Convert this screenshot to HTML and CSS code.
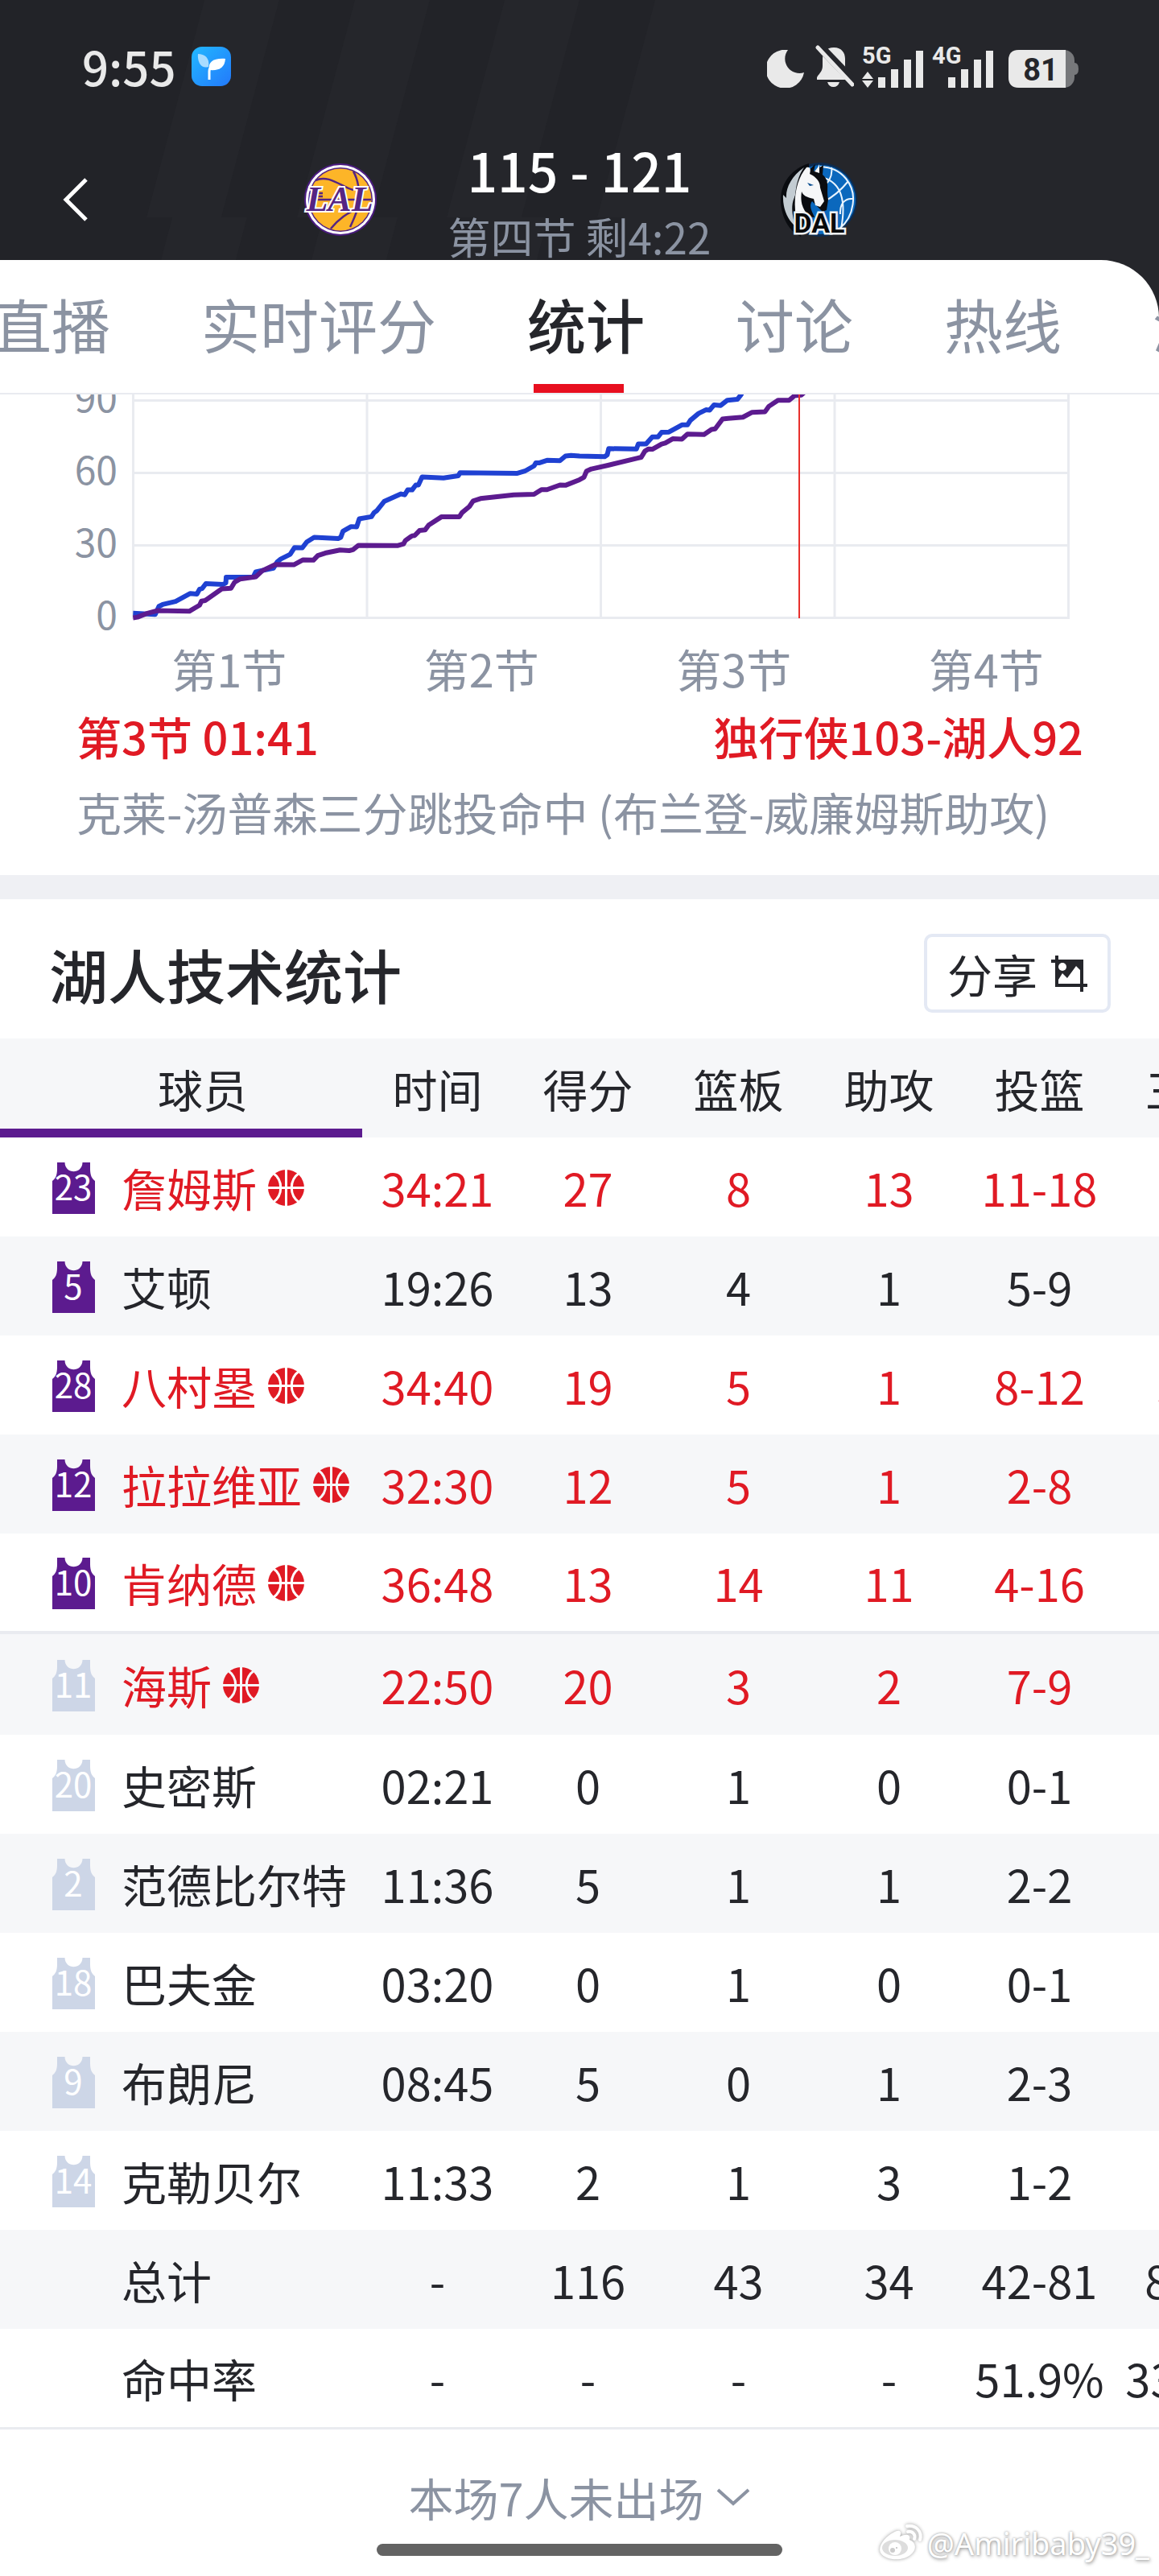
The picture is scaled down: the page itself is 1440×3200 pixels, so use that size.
FILE: index.html
```html
<!DOCTYPE html>
<html lang="zh-CN">
<head>
<meta charset="utf-8">
<meta name="viewport" content="width=device-width, initial-scale=1">
<title>湖人技术统计</title>
<link rel="stylesheet" href="styles.css">
</head>
<body>
<svg class="sprite" aria-hidden="true">
  <symbol id="jersey" viewBox="0 0 53 64"><path d="M6 0H15.500C16 15 37 15 37.500 0H47V8C47 16 49 20 53 23V64H0V23C4 20 6 16 6 8Z"/></symbol>
  <symbol id="ball" viewBox="0 0 45 45">
    <circle cx="22.500" cy="22.500" r="22.500" fill="currentColor"/>
    <g fill="none" stroke="var(--row)" stroke-width="3"><path d="M22.500 0V45M0 22.500H45M6 4C19 13 19 32 6 41M39 4C26 13 26 32 39 41"/></g>
  </symbol>
</svg>

<header class="hero">
  <svg class="stripes" viewBox="0 0 1440 323" preserveAspectRatio="none" aria-hidden="true">
    <path d="M254 0H347L275 270H182ZM441 0H534L462 270H369ZM627 0H720L648 270H555ZM814 0H1440V323H761L775 270H742ZM214 270H307L293 323H200ZM401 270H494L480 323H387ZM588 270H681L667 323H574Z"/>
  </svg>
  <div class="status">
    <span class="clock">9:55</span>
    <svg class="app" viewBox="0 0 49 49" aria-hidden="true">
      <defs><linearGradient id="sky" x1="0" y1="0" x2="1" y2="1"><stop offset="0" stop-color="#22b8ff"/><stop offset="1" stop-color="#2379fb"/></linearGradient></defs>
      <rect width="49" height="49" rx="13" fill="url(#sky)"/>
      <path d="M8 9C17 9 23 15 21 25C12 28 7 19 8 9Z" fill="#a9dcff"/>
      <path d="M42 15C27 14 20 19 22 29C35 30 41 26 42 15Z" fill="#fff"/>
      <path d="M22 41V31Q22 25 28 23" fill="none" stroke="#fff" stroke-width="3"/>
    </svg>
    <div class="indicators">
      <svg class="moon" viewBox="0 0 46 47" aria-hidden="true"><path d="M26 0A24 24 0 1 0 46 28A18 18 0 0 1 26 0Z"/></svg>
      <svg class="bell" viewBox="0 0 48 53" aria-hidden="true">
        <path d="M23 3C33 3 37 10 37 17V26C37 32 44 36 44 41V43H2V40C4 36 9 33 9 26V17C9 9 14 3 23 3ZM15 46H30Q28 52 22.500 52Q17 52 15 46Z"/>
        <path d="M2 -2L49 47" stroke="#25262b" stroke-width="11"/><path d="M3 3L46 49" stroke="#e9e9e9" stroke-width="5" stroke-linecap="round"/>
      </svg>
      <svg class="signal" viewBox="0 0 77 53" aria-hidden="true">
        <text x="0" y="23">5G</text>
        <path d="M7 33L14 42H0ZM7 53L0 44H14Z"/>
        <path d="M20 40h9v13h-9zM36 30h9v23h-9zM52 18h9v35h-9zM67 7h9v46h-9z"/>
      </svg>
      <svg class="signal" viewBox="0 0 77 53" aria-hidden="true">
        <text x="0" y="23">4G</text>
        <path d="M20 40h9v13h-9zM36 30h9v23h-9zM52 18h9v35h-9zM67 7h9v46h-9z"/>
      </svg>
      <svg class="battery" viewBox="0 0 87 47" aria-hidden="true">
        <rect width="82" height="47" rx="13" fill="#77787b"/><path d="M82 16Q87 16 87 23.500Q87 31 82 31Z" fill="#77787b"/>
        <path d="M13 0H71V47H13Q0 47 0 34V13Q0 0 13 0Z"/>
        <text class="charge" x="40" y="38" text-anchor="middle">81</text>
      </svg>
    </div>
  </div>
  <div class="match">
    <button class="back" type="button" aria-label="返回"><svg viewBox="0 0 32 54" aria-hidden="true"><path d="M29 2L4 27L29 52"/></svg></button>
    <svg class="team" viewBox="0 0 96 96" role="img" aria-label="LAL">
      <circle cx="48" cy="48" r="45" fill="#4b1c80"/><circle cx="48" cy="48" r="43" fill="#fff"/><circle cx="48" cy="48" r="40" fill="#552583"/><circle cx="48" cy="48" r="38.500" fill="#fdb528"/>
      <g fill="none" stroke="#552583" stroke-width="2.500"><path d="M17 24C34 16 50 33 64 36M10 48H86M10 40H26M10 44H26M64 13C70 23 72 38 71 50C70 62 64 73 60 82M71 60C58 62 44 74 36 84"/></g>
      <text class="lal" x="47" y="62" text-anchor="middle">LAL</text>
    </svg>
    <div class="score">
      <strong class="points">115 - 121</strong>
      <span class="period">第四节 剩4:22</span>
    </div>
    <svg class="team" viewBox="0 0 96 96" role="img" aria-label="DAL">
      <circle cx="50" cy="48" r="46" fill="#0c2c52"/><circle cx="51" cy="48" r="43" fill="#0b68bd"/>
      <g fill="none" stroke="#e8f4ff" stroke-width="2"><path d="M50 7C80 8 92 32 91 49C90 66 84 76 74 84M64 8C66 20 58 31 54 28M50 20C72 24 84 42 76 84M55 50C68 44 76 36 85 25M75 66C74 52 82 46 90 47"/></g>
      <path d="M36 3C16 9 1 26 1 48C1 70 12 88 26 94L36 50Z" fill="#0a0c10"/>
      <path d="M30 8C14 19 7 34 8 46L4 42C3 61 11 74 19 81C14 62 14 53 19 43C20 30 23 18 30 8Z" fill="#c3ccd2"/>
      <path d="M44 4L42 13L54 5L53 17C63 26 57 33 60 48L58 61L53 63L40 50C35 56 41 65 43 70L18 67C15 47 22 24 34 13Z" fill="#0a0c10"/>
      <path d="M33 8C37 7 39 9 37 16C44 19 50 25 50 33L55 50L50 57L44 55L42 47C33 45 29 43 27 38C25 51 28 60 36 68L20 70C16 45 21 22 33 8ZM47 8L49 4V15L43 13Z" fill="#f6f7f8"/>
      <path d="M34 27L42 30L37 31Z" fill="#0b4f91"/>
      <text class="dal" x="49" y="89" text-anchor="middle">DAL</text>
    </svg>
  </div>
</header>

<div class="tab-shell">
<nav class="tabs" aria-label="比赛导航">
  <a href="#live">直播</a>
  <a href="#rating">实时评分</a>
  <a href="#stats" class="active" aria-current="page">统计</a>
  <a href="#talk">讨论</a>
  <a href="#hot">热线</a>
  <a href="#more">游戏</a>
</nav>
</div>

<main>
<section class="trend" aria-label="得分走势">
  <svg class="chart" viewBox="0 490 1440 300" aria-hidden="true">
    <path class="grid" d="M164 497.500H1329M164 587.500H1329M164 677.500H1329M164 767.500H1329M165.500 480V767M456 480V767M746.500 480V767M1037 480V767M1327.500 480V767"/>
    <g class="ticks" text-anchor="end"><text x="146" y="512">90</text><text x="146" y="602">60</text><text x="146" y="692">30</text><text x="146" y="782">0</text></g>
    <g class="curves" transform="translate(0 480) scale(.4592 .3827)">
      <polyline class="away" points="360,736 420,740 430,714 440,708 475,698 515,672 533,674 540,658 547,656 557,640 603,643 611,638 612,619 685,619 692,602 740,590 750,570 760,560 785,545 797,523 818,524 830,505 850,490 915,494 922,490 928,470 950,455 965,456 972,430 1005,423 1012,410 1020,403 1040,373 1085,349 1095,352 1103,336 1115,336 1125,320 1132,320 1142,294 1200,297 1240,290 1245,280 1400,282 1420,275 1445,258 1450,248 1460,248 1480,240 1515,241 1530,226 1545,224 1568,226 1636,228 1643,222 1647,202 1722,203 1727,187 1748,187 1765,164 1780,164 1790,149 1810,148 1845,125 1860,125 1868,110 1890,88 1910,76 1920,77 1932,60 1950,62 1968,45 1995,42 2005,27 2012,10"/>
      <polyline class="home" points="360,751 372,749 395,738 425,728 512,730 540,710 545,697 555,695 600,657 625,655 635,635 650,625 692,618 710,598 745,578 795,579 820,563 848,564 860,549 880,541 920,531 945,533 955,530 970,516 1075,517 1092,511 1097,500 1115,485 1122,484 1135,468 1150,466 1160,450 1195,423 1243,423 1250,410 1270,390 1280,372 1300,364 1390,352 1445,350 1465,335 1480,335 1515,320 1530,321 1568,303 1580,295 1587,275 1600,268 1645,256 1725,233 1735,230 1745,210 1755,203 1765,204 1790,187 1800,184 1820,170 1845,171 1860,155 1905,156 1925,140 1935,138 1955,106 1970,104 2010,100 2035,84 2070,82 2080,65 2105,45 2135,45 2150,30 2168,28 2185,10"/>
    </g>
    <path class="cursor" d="M993 480V768"/>
  </svg>
  <div class="quarters"><span>第1节</span><span>第2节</span><span>第3节</span><span>第4节</span></div>
  <div class="moment"><span>第3节 01:41</span><span>独行侠103-湖人92</span></div>
  <p class="play">克莱-汤普森三分跳投命中 (布兰登-威廉姆斯助攻)</p>
</section>

<section class="stats" id="stats">
  <div class="stats-head">
    <h1>湖人技术统计</h1>
    <button class="share" type="button">分享
      <svg viewBox="0 0 45 45" aria-hidden="true"><path d="M5 0H9V5H40V35H45V39H40V45H36V39H5V9H0V5H5ZM9 30V35H36V18L31 13L20 28L14 22Z" fill-rule="evenodd"/><circle cx="14" cy="14" r="5" fill="#fff"/></svg>
    </button>
  </div>
  <div class="scroller">
  <table>
    <colgroup><col class="c-player"><col span="6" class="c-stat"></colgroup>
    <thead><tr><th scope="col">球员</th><th scope="col">时间</th><th scope="col">得分</th><th scope="col">篮板</th><th scope="col">助攻</th><th scope="col">投篮</th><th scope="col">三分</th></tr></thead>
    <tbody class="starters">
      <tr class="on"><th scope="row"><div class="player"><svg class="jersey"><use href="#jersey"/><text x="26" y="47">23</text></svg>詹姆斯<svg class="ball"><use href="#ball"/></svg></div></th><td>34:21</td><td>27</td><td>8</td><td>13</td><td>11-18</td><td></td></tr>
      <tr><th scope="row"><div class="player"><svg class="jersey"><use href="#jersey"/><text x="26" y="47">5</text></svg>艾顿</div></th><td>19:26</td><td>13</td><td>4</td><td>1</td><td>5-9</td><td>0-0</td></tr>
      <tr class="on"><th scope="row"><div class="player"><svg class="jersey"><use href="#jersey"/><text x="26" y="47">28</text></svg>八村塁<svg class="ball"><use href="#ball"/></svg></div></th><td>34:40</td><td>19</td><td>5</td><td>1</td><td>8-12</td><td>3-5</td></tr>
      <tr class="on"><th scope="row"><div class="player"><svg class="jersey"><use href="#jersey"/><text x="26" y="47">12</text></svg>拉拉维亚<svg class="ball"><use href="#ball"/></svg></div></th><td>32:30</td><td>12</td><td>5</td><td>1</td><td>2-8</td><td></td></tr>
      <tr class="on"><th scope="row"><div class="player"><svg class="jersey"><use href="#jersey"/><text x="26" y="47">10</text></svg>肯纳德<svg class="ball"><use href="#ball"/></svg></div></th><td>36:48</td><td>13</td><td>14</td><td>11</td><td>4-16</td><td></td></tr>
    </tbody>
    <tbody class="bench">
      <tr class="on"><th scope="row"><div class="player"><svg class="jersey"><use href="#jersey"/><text x="26" y="47">11</text></svg>海斯<svg class="ball"><use href="#ball"/></svg></div></th><td>22:50</td><td>20</td><td>3</td><td>2</td><td>7-9</td><td>0-0</td></tr>
      <tr><th scope="row"><div class="player"><svg class="jersey"><use href="#jersey"/><text x="26" y="47">20</text></svg>史密斯</div></th><td>02:21</td><td>0</td><td>1</td><td>0</td><td>0-1</td><td>0-1</td></tr>
      <tr><th scope="row"><div class="player"><svg class="jersey"><use href="#jersey"/><text x="26" y="47">2</text></svg>范德比尔特</div></th><td>11:36</td><td>5</td><td>1</td><td>1</td><td>2-2</td><td></td></tr>
      <tr><th scope="row"><div class="player"><svg class="jersey"><use href="#jersey"/><text x="26" y="47">18</text></svg>巴夫金</div></th><td>03:20</td><td>0</td><td>1</td><td>0</td><td>0-1</td><td>0-1</td></tr>
      <tr><th scope="row"><div class="player"><svg class="jersey"><use href="#jersey"/><text x="26" y="47">9</text></svg>布朗尼</div></th><td>08:45</td><td>5</td><td>0</td><td>1</td><td>2-3</td><td>1-1</td></tr>
      <tr><th scope="row"><div class="player"><svg class="jersey"><use href="#jersey"/><text x="26" y="47">14</text></svg>克勒贝尔</div></th><td>11:33</td><td>2</td><td>1</td><td>3</td><td>1-2</td><td>0-1</td></tr>
      <tr><th scope="row"><div class="player sum">总计</div></th><td>-</td><td>116</td><td>43</td><td>34</td><td>42-81</td><td>8-24</td></tr>
      <tr><th scope="row"><div class="player sum">命中率</div></th><td>-</td><td>-</td><td>-</td><td>-</td><td>51.9%</td><td>33.3%</td></tr>
    </tbody>
  </table>
  </div>
</section>
</main>

<footer class="foot">
  <button class="absent" type="button">本场7人未出场<svg viewBox="0 0 44 24" aria-hidden="true"><path d="M3 3L22 20L41 3"/></svg></button>
  <div class="homebar"></div>
  <div class="watermark">
    <svg viewBox="0 0 54 46" aria-hidden="true">
      <path d="M18 10C26 5 29 9 26 15C34 11 40 12 38 19C46 22 48 31 39 38C29 46 8 45 2 35C-2 27 8 15 18 10Z" fill="#fff"/>
      <ellipse cx="20" cy="29" rx="16" ry="10" fill="#ddd"/><circle cx="20" cy="30" r="8" fill="#fff"/><circle cx="17" cy="32" r="3" fill="#ccc"/><circle cx="22" cy="29" r="1" fill="#bbb"/>
      <path d="M35 2C46 0 54 9 51 19M36 9C42 8 46 13 44 18" fill="none" stroke="#fff" stroke-width="4" stroke-linecap="round"/>
    </svg><span>@Amiribaby39_</span>
  </div>
</footer>
</body>
</html>
```
FILE: styles.css
```css
:root {
  --ink: #25262b;
  --muted: #8b93a2;
  --red: #e01a24;
  --purple: #5c1b8f;
  --tint: #f6f7f9;
  --line: #e9ebf0;
}

* { box-sizing: border-box; }

body {
  margin: 0;
  min-height: 100vh;
  overflow-x: hidden;
  background: #fff;
  color: var(--ink);
  font-family: "Noto Sans CJK SC", "Noto Sans", sans-serif;
  font-size: 56px;
  line-height: 80px;
}

button { font: inherit; color: inherit; background: none; border: 0; padding: 0; }
svg { display: block; flex: none; }
.sprite { position: absolute; width: 0; height: 0; }

/* Dark match header */
.hero { position: relative; height: 323px; background: #222328; color: #fff; }
.stripes { position: absolute; inset: 0; width: 100%; height: 100%; fill: #25262b; }

.status { position: relative; display: flex; align-items: center; height: 164px; padding: 0 100px 0 102px; }
.clock { color: #e9e9e9; font-weight: 500; font-size: 58px; }
.app { width: 49px; height: 49px; margin-left: 20px; }
.indicators { display: flex; align-items: flex-end; gap: 10px; margin-left: auto; fill: #e9e9e9; }
.moon { width: 46px; height: 47px; margin-right: 4px; }
.bell { width: 48px; height: 53px; }
.signal { width: 77px; height: 53px; overflow: visible; }
.signal text { font-size: 29px; font-weight: 700; font-family: Roboto, sans-serif; }
.battery { width: 87px; height: 47px; margin-left: 8px; }
.battery .charge { fill: var(--ink); font-size: 38px; font-weight: 700; font-family: Roboto, sans-serif; }

.match { position: relative; display: grid; grid-template-columns: 1fr 96px auto 96px 1fr; column-gap: 86px; align-items: center; height: 168px; }
.back { justify-self: start; margin-left: 78px; }
.back svg { width: 32px; height: 54px; fill: none; stroke: #fff; stroke-width: 5; }
.team { width: 96px; height: 96px; }
.lal { font: italic 700 44px "Liberation Serif", serif; fill: #552583; stroke: #fff; stroke-width: 4; paint-order: stroke; }
.dal { font: 700 34px Roboto, sans-serif; fill: #08090b; stroke: #eef1f3; stroke-width: 5; paint-order: stroke; }
.score { display: flex; flex-direction: column; align-items: center; align-self: start; gap: 8px; width: 326px; white-space: nowrap; }
.points { font-size: 66px; font-weight: 500; line-height: 92px; }
.period { color: var(--muted); font-size: 53px; line-height: 58px; }

/* Tabs */
.tab-shell { position: relative; background: #25262b; }
.tabs {
  display: flex;
  gap: 113px;
  height: 167px;
  overflow: hidden;
  background: #fff;
  border-bottom: 2px solid var(--line);
  border-top-right-radius: 72px;
  font-size: 73px;
  line-height: 157px;
  white-space: nowrap;
}
.tabs a { flex: none; color: var(--muted); text-decoration: none; }
.tabs a:first-child { margin-left: -9px; }
.tabs .active {
  color: var(--ink);
  font-weight: 500;
  background: linear-gradient(#e80f1f, #e80f1f) 8px bottom / 112px 11px no-repeat;
}

/* Score trend */
.trend { padding-bottom: 39px; border-bottom: 30px solid #eff0f4; }
.chart { width: 100%; height: auto; }
.grid { fill: none; stroke: var(--line); stroke-width: 3; }
.ticks { fill: var(--muted); font-size: 48px; }
.curves polyline { fill: none; stroke-width: 6; stroke-linejoin: round; vector-effect: non-scaling-stroke; }
.away { stroke: #1f41d2; }
.home { stroke: #5c1b8f; }
.cursor { stroke: #e8302c; stroke-width: 2; }
.quarters { display: grid; grid-template-columns: repeat(4, 1fr); padding: 0 58px 0 128px; color: var(--muted); text-align: center; }
.moment { display: flex; justify-content: space-between; padding: 4px 94px 0 95px; color: var(--red); font-weight: 500; }
.play { margin: 0; padding: 14px 94px 0 95px; color: var(--muted); }

/* Team table */
.stats-head { display: flex; align-items: center; justify-content: space-between; padding: 40px 60px 29px 61px; }
h1 { margin: 0; font-size: 73px; font-weight: 500; line-height: 104px; }
.share { display: flex; align-items: center; gap: 17px; height: 98px; padding: 0 25px; border: 4px solid #e4e9f4; border-radius: 10px; }
.share svg { width: 45px; height: 45px; fill: var(--ink); }

.scroller { overflow: hidden; }
table { width: 1572px; table-layout: fixed; border-collapse: collapse; }
.c-player { width: 450px; }
.c-stat { width: 187px; }
tr { --row: #fff; height: 123px; background: var(--row); }
thead tr, .starters tr:nth-child(even), .bench tr:nth-child(odd) { --row: var(--tint); }
.bench tr:nth-child(8) { --row: #fff; }
th, td { padding: 0; font-weight: 400; text-align: center; white-space: nowrap; }
thead th:first-child { padding-left: 54px; box-shadow: inset 0 -11px var(--purple); }
.bench tr:first-child > * { border-top: 4px solid var(--line); }
.bench tr:first-child { height: 127px; }
.bench { border-bottom: 3px solid var(--line); }
.on { color: var(--red); }
.player { display: flex; align-items: center; padding-left: 65px; }
.player.sum { padding-left: 151px; }
.jersey { width: 53px; height: 64px; margin: 3px 33px 0 0; fill: var(--purple); overflow: visible; }
.bench .jersey { fill: #cdd6e7; }
.jersey text, .bench .jersey text { fill: #fff; font-size: 42px; text-anchor: middle; }
.ball { width: 45px; height: 45px; margin: 2px 0 0 14px; }

/* Footer */
.foot { position: relative; display: flex; flex-direction: column; align-items: center; padding: 44px 0 22px; }
.absent { display: flex; align-items: center; gap: 14px; color: var(--muted); }
.absent svg { width: 44px; height: 24px; fill: none; stroke: var(--muted); stroke-width: 4; }
.homebar { width: 35%; height: 15px; margin-top: 18px; border-radius: 8px; background: #636363; }
.watermark {
  position: absolute;
  right: 12px;
  bottom: 10px;
  display: flex;
  align-items: center;
  gap: 6px;
  color: #fff;
  font: 38px/56px "Noto Sans", sans-serif;
  text-shadow: 0 0 3px #999, 1px 2px 4px #aaa;
}
.watermark svg { width: 54px; height: 46px; overflow: visible; filter: drop-shadow(0 0 2px #999); }
```
